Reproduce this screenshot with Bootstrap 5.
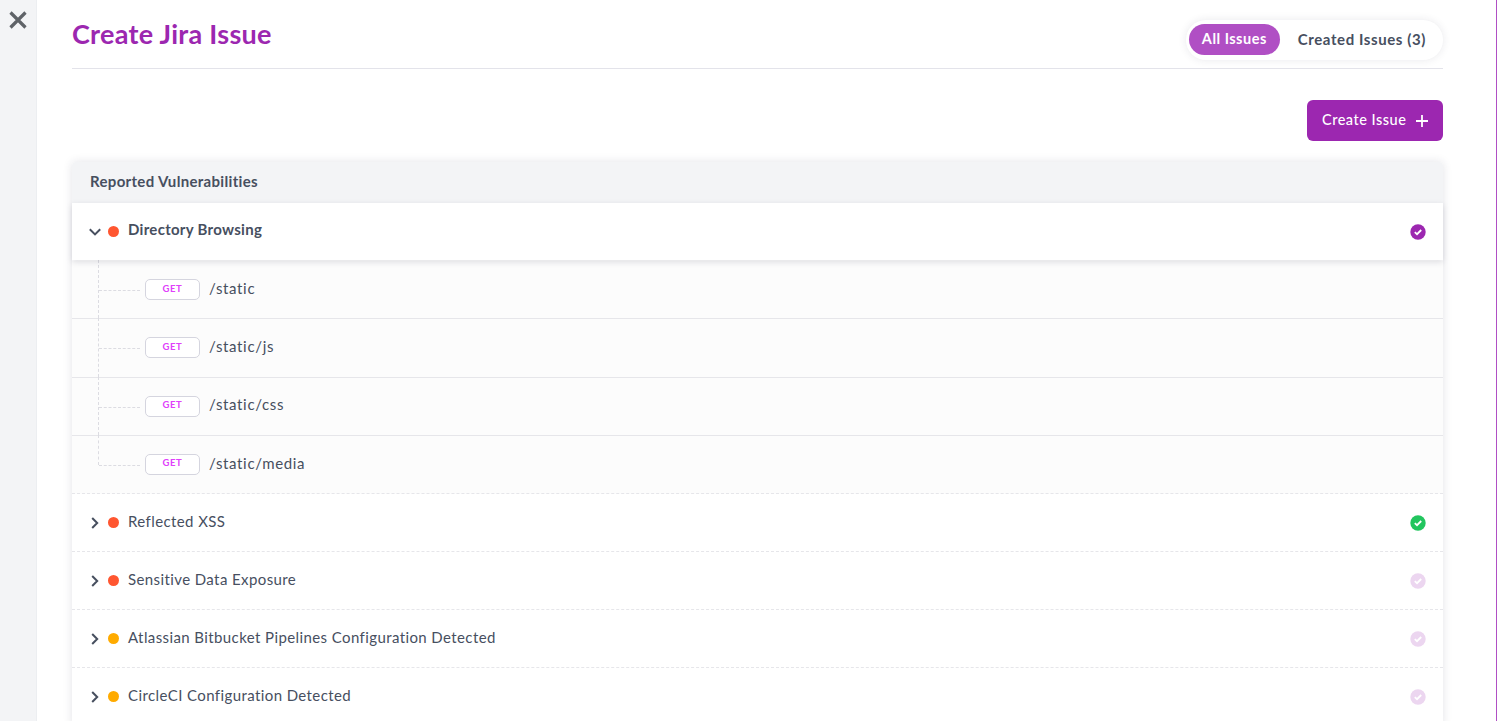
<!DOCTYPE html>
<html lang="en">
<head>
<meta charset="utf-8">
<title>Create Jira Issue</title>
<link href="https://cdn.jsdelivr.net/npm/bootstrap@5.3.0/dist/css/bootstrap.min.css" rel="stylesheet">
<style>
html,body{height:100%;overflow:hidden}
body{font-family:Lato,"Liberation Sans",sans-serif;color:#474f5f;background:#fff}
.shell{height:721px;overflow:hidden}
.side-rail{width:37px;flex:none;background:#f3f4f6;border-right:1px solid #eceef1;padding:11px 0 0 9px}
.side-rail svg{display:block}
.main-pane{flex:1;min-width:0;padding:0 53px 0 35px;border-right:1px solid #b04fc4}
.page-head{height:69px;border-bottom:1px solid #e3e3ea}
.page-title{font-size:27px;font-weight:700;color:#9c27b0;margin:17px 0 0;line-height:34px;letter-spacing:.28px}
.seg{margin-top:20px;height:40px;padding:4px 3px;border-radius:20px;background:#fff;box-shadow:0 0 8px rgba(40,40,70,.1)}
.seg-on{width:91px;height:31px;border-radius:16px;background:#b04fc4;color:#fff;font-size:14.5px;font-weight:700;border:0;padding:0 0 1px;letter-spacing:.5px}
.seg-off{height:31px;background:none;border:0;color:#474f5f;font-size:15px;font-weight:700;padding:0 14px 1px 18px;letter-spacing:.59px}
.act-row{padding-top:31px;height:93px}
.btn-make{width:136px;height:41px;background:#9c27b0;color:#fff;border:0;border-radius:6px;font-size:14.5px;font-weight:500;letter-spacing:.5px;padding:0 14px 2px 15px}
.btn-make:hover{background:#9c27b0;color:#fff}
.btn-make svg{margin-top:2px}
.vuln-box{box-shadow:0 0 10px rgba(40,40,70,.13);border-radius:4px 4px 0 0;background:#fff}
.vuln-head{height:41px;background:#f3f4f6;font-size:15px;font-weight:700;padding:0 0 2px 18px;letter-spacing:.32px;border-radius:4px 4px 0 0}
.vuln-row{height:58px;border-bottom:1px dashed #e6e6ea;padding:0 17.5px 0 18px;font-size:15px;letter-spacing:.4px}
.vuln-row.is-open{height:57px;margin-bottom:1px;border-bottom:0;font-weight:700;box-shadow:0 2px 6px rgba(40,40,70,.15);position:relative;z-index:1;letter-spacing:.29px}
.chev{width:12px;flex:none;margin:0 7px 0 -1px}
.sev{width:11px;height:11px;border-radius:50%;flex:none;margin-right:9px}
.sev-high{background:#ff5630}
.sev-med{background:#ffab00}
.vuln-name{margin-top:-2px}
.is-open .vuln-name{margin-top:-4px}
.tick{margin-left:auto;flex:none;display:block}
.sub-list{background:#fcfcfc;position:relative}
.sub-row{height:58.25px;border-bottom:1px solid #e6e6ea;padding-left:73px;font-size:15px;letter-spacing:.66px;position:relative}
.sub-row:last-child{border-bottom:1px dashed #e6e6ea}
.sub-row::before{content:"";position:absolute;left:26px;top:-1px;bottom:0;border-left:1px dashed #dcdce2}
.sub-row::after{content:"";position:absolute;left:27px;top:29px;width:41px;border-top:1px dashed #dcdce2}
.sub-row:last-child::before{bottom:28px}
.verb{width:55px;height:21px;border:1px solid #d5d5df;border-radius:5px;background:#fff;color:#e040fb;font-size:9.5px;font-weight:700;letter-spacing:.6px;margin-right:9px;padding-bottom:2px}
.sub-path{margin-top:-3px}
</style>
</head>
<body>
<div class="shell d-flex">
  <aside class="side-rail">
    <svg width="18" height="18" viewBox="0 0 18 18" aria-hidden="true"><path d="M1.500 1.500 16.500 16.500M16.500 1.500 1.500 16.500" stroke="#5f6368" stroke-width="3.200" fill="none"/></svg>
  </aside>
  <main class="main-pane">
    <header class="page-head d-flex justify-content-between align-items-start">
      <h1 class="page-title">Create Jira Issue</h1>
      <div class="seg d-flex align-items-start">
        <button class="seg-on" type="button">All Issues</button>
        <button class="seg-off" type="button">Created Issues (3)</button>
      </div>
    </header>
    <div class="act-row d-flex justify-content-end align-items-start">
      <button class="btn btn-make d-flex align-items-center justify-content-between" type="button">Create Issue
        <svg width="14" height="14" viewBox="0 0 14 14" aria-hidden="true"><path d="M7 1V13M1 7H13" stroke="#fff" stroke-width="1.800" fill="none"/></svg>
      </button>
    </div>
    <section class="vuln-box">
      <div class="vuln-head d-flex align-items-center">Reported Vulnerabilities</div>

      <div class="vuln-row is-open d-flex align-items-center">
        <svg class="chev" width="12" height="12" viewBox="0 0 12 12" aria-hidden="true"><path d="M.8 3.2 6 8.4l5.200-5.200" stroke="#474f5f" stroke-width="2" fill="none"/></svg>
        <span class="sev sev-high"></span>
        <span class="vuln-name">Directory Browsing</span>
        <svg class="tick" width="16" height="16" viewBox="0 0 16 16" aria-hidden="true"><circle cx="8" cy="8" r="7.700" fill="#9c27b0"/><path d="M4.800 8.200 7 10.200 11.200 6" stroke="#fff" stroke-width="1.800" fill="none"/></svg>
      </div>

      <div class="sub-list">
        <div class="sub-row d-flex align-items-center"><span class="verb d-flex align-items-center justify-content-center">GET</span><span class="sub-path">/static</span></div>
        <div class="sub-row d-flex align-items-center"><span class="verb d-flex align-items-center justify-content-center">GET</span><span class="sub-path">/static/js</span></div>
        <div class="sub-row d-flex align-items-center"><span class="verb d-flex align-items-center justify-content-center">GET</span><span class="sub-path">/static/css</span></div>
        <div class="sub-row d-flex align-items-center"><span class="verb d-flex align-items-center justify-content-center">GET</span><span class="sub-path">/static/media</span></div>
      </div>

      <div class="vuln-row d-flex align-items-center">
        <svg class="chev" width="12" height="12" viewBox="0 0 12 12" aria-hidden="true"><path d="M3.200 1 8.200 6l-5 5" stroke="#474f5f" stroke-width="2" fill="none"/></svg>
        <span class="sev sev-high"></span>
        <span class="vuln-name">Reflected XSS</span>
        <svg class="tick" width="16" height="16" viewBox="0 0 16 16" aria-hidden="true"><circle cx="8" cy="8" r="7.700" fill="#22c55e"/><path d="M4.800 8.200 7 10.200 11.200 6" stroke="#fff" stroke-width="1.800" fill="none"/></svg>
      </div>
      <div class="vuln-row d-flex align-items-center">
        <svg class="chev" width="12" height="12" viewBox="0 0 12 12" aria-hidden="true"><path d="M3.200 1 8.200 6l-5 5" stroke="#474f5f" stroke-width="2" fill="none"/></svg>
        <span class="sev sev-high"></span>
        <span class="vuln-name">Sensitive Data Exposure</span>
        <svg class="tick" width="16" height="16" viewBox="0 0 16 16" aria-hidden="true"><circle cx="8" cy="8" r="7.700" fill="#ecd6f0"/><path d="M4.800 8.200 7 10.200 11.200 6" stroke="#fff" stroke-width="1.800" fill="none"/></svg>
      </div>
      <div class="vuln-row d-flex align-items-center">
        <svg class="chev" width="12" height="12" viewBox="0 0 12 12" aria-hidden="true"><path d="M3.200 1 8.200 6l-5 5" stroke="#474f5f" stroke-width="2" fill="none"/></svg>
        <span class="sev sev-med"></span>
        <span class="vuln-name">Atlassian Bitbucket Pipelines Configuration Detected</span>
        <svg class="tick" width="16" height="16" viewBox="0 0 16 16" aria-hidden="true"><circle cx="8" cy="8" r="7.700" fill="#ecd6f0"/><path d="M4.800 8.200 7 10.200 11.200 6" stroke="#fff" stroke-width="1.800" fill="none"/></svg>
      </div>
      <div class="vuln-row d-flex align-items-center">
        <svg class="chev" width="12" height="12" viewBox="0 0 12 12" aria-hidden="true"><path d="M3.200 1 8.200 6l-5 5" stroke="#474f5f" stroke-width="2" fill="none"/></svg>
        <span class="sev sev-med"></span>
        <span class="vuln-name">CircleCI Configuration Detected</span>
        <svg class="tick" width="16" height="16" viewBox="0 0 16 16" aria-hidden="true"><circle cx="8" cy="8" r="7.700" fill="#ecd6f0"/><path d="M4.800 8.200 7 10.200 11.200 6" stroke="#fff" stroke-width="1.800" fill="none"/></svg>
      </div>
    </section>
  </main>
</div>
<script src="https://cdn.jsdelivr.net/npm/bootstrap@5.3.0/dist/js/bootstrap.bundle.min.js"></script>
</body>
</html>
